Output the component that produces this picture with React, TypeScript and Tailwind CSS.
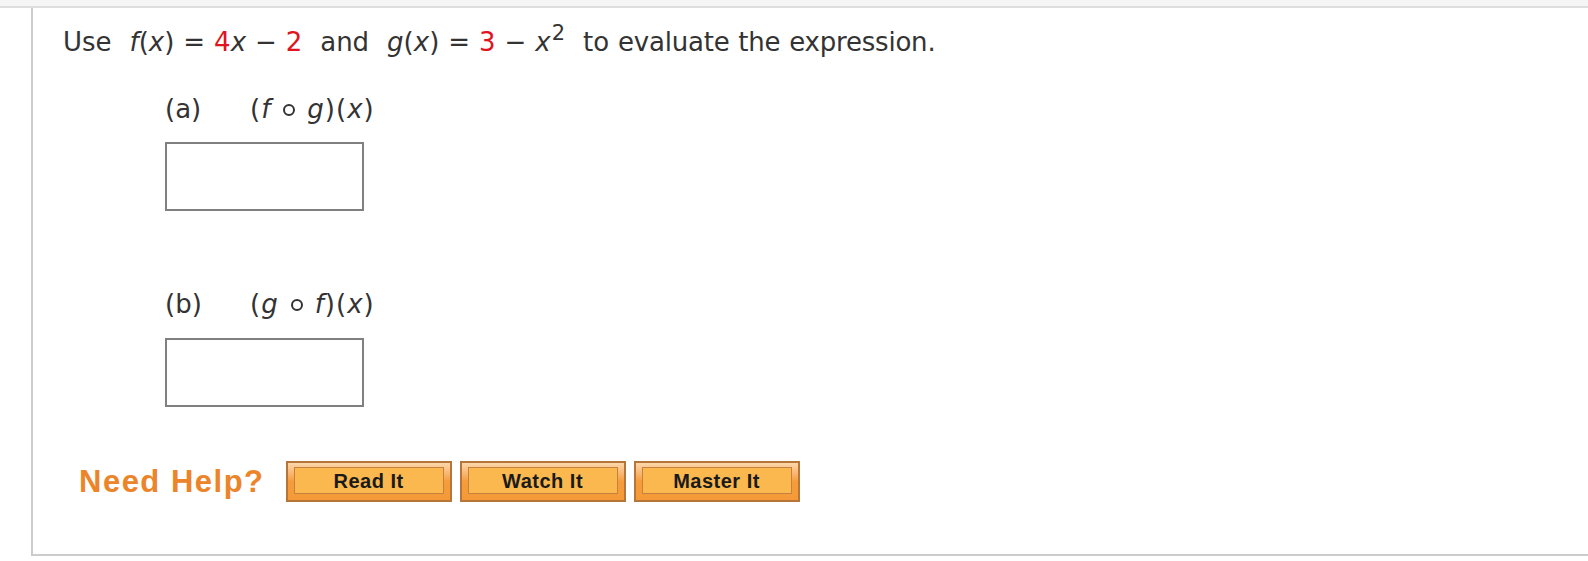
import React from 'react';

const red = 'text-[#e0141e]';

function I({ children }: { children: React.ReactNode }) {
  return <span className="italic">{children}</span>;
}

function Ring() {
  return <span className="mx-[12px] inline-block h-[12px] w-[12px] rounded-full border-[2.5px] border-[#333] align-middle relative -top-[1px]" />;
}

function HelpButton({ label }: { label: string }) {
  return (
    <div className="h-[41px] w-[166px] border-2 border-[#b77639] bg-gradient-to-b from-[#fcd7aa] via-[#f59c3b] to-[#f59a38] px-[6px] pt-[4px]">
      <div className="flex h-[27px] items-center justify-center border border-[#c4813f] bg-[#fbb84f] text-[20px] font-bold tracking-[0.5px] text-[#1a1a1a] [font-family:'Liberation_Sans',Arial,sans-serif]">
        {label}
      </div>
    </div>
  );
}

function Part({ letter, expr }: { letter: string; expr: React.ReactNode }) {
  return (
    <div className="pl-[102px]">
      <div className="flex items-center">
        <span className="w-[85px]">({letter})</span>
        <span className="tracking-[1px]">{expr}</span>
      </div>
    </div>
  );
}

export default function App() {
  return (
    <div className="h-[561px] w-full overflow-hidden bg-white text-[#333] [font-family:'DejaVu_Sans',Verdana,sans-serif] text-[26px] leading-[30px]">
      <div className="h-[8px] border-b-2 border-[#dddddd] bg-[#f5f5f5]" />
      <div className="ml-[31px] h-[548px] border-b-2 border-l-2 border-[#cccccc] pl-[30px] pt-[19px]">
        <p className="whitespace-pre [word-spacing:0.7px]">
          Use  <I>f</I>(<I>x</I>) = <span className={red}>4</span><I>x</I> − <span className={red}>2</span>  and  <I>g</I>(<I>x</I>) = <span className={red}>3</span> − <I>x</I>
          <sup className="-top-[11px] ml-[1px] text-[21px]">2</sup>  to <span className="tracking-[-0.2px]">evaluate the expression.</span>
        </p>

        <div className="mt-[37px]">
          <Part
            letter="a"
            expr={
              <>
                (<I>f</I>
                <Ring />
                <I>g</I>)(<I>x</I>)
              </>
            }
          />
          <div className="ml-[102px] mt-[18px] h-[69px] w-[199px] border-2 border-[#808080]" />
        </div>

        <div className="mt-[78px]">
          <Part
            letter="b"
            expr={
              <>
                (<I>g</I>
                <Ring />
                <I>f</I>)(<I>x</I>)
              </>
            }
          />
          <div className="ml-[102px] mt-[19px] h-[69px] w-[199px] border-2 border-[#808080]" />
        </div>

        <div className="mt-[54px] flex items-center pl-[16px]">
          <span className="mr-[21px] text-[31px] font-bold tracking-[1.5px] text-[#ec8429] [font-family:'Liberation_Sans',Arial,sans-serif]">
            Need Help?
          </span>
          <div className="flex gap-[8px]">
            <HelpButton label="Read It" />
            <HelpButton label="Watch It" />
            <HelpButton label="Master It" />
          </div>
        </div>
      </div>
    </div>
  );
}
